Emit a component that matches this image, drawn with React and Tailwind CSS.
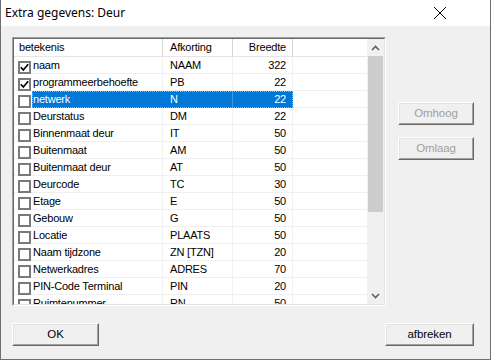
import React from 'react';

const rows = [
  { name: 'naam', abbr: 'NAAM', width: 322, checked: true },
  { name: 'programmeerbehoefte', abbr: 'PB', width: 22, checked: true },
  { name: 'netwerk', abbr: 'N', width: 22, selected: true },
  { name: 'Deurstatus', abbr: 'DM', width: 22 },
  { name: 'Binnenmaat deur', abbr: 'IT', width: 50 },
  { name: 'Buitenmaat', abbr: 'AM', width: 50 },
  { name: 'Buitenmaat deur', abbr: 'AT', width: 50 },
  { name: 'Deurcode', abbr: 'TC', width: 30 },
  { name: 'Etage', abbr: 'E', width: 50 },
  { name: 'Gebouw', abbr: 'G', width: 50 },
  { name: 'Locatie', abbr: 'PLAATS', width: 50 },
  { name: 'Naam tijdzone', abbr: 'ZN [TZN]', width: 20 },
  { name: 'Netwerkadres', abbr: 'ADRES', width: 70 },
  { name: 'PIN-Code Terminal', abbr: 'PIN', width: 20 },
  { name: 'Ruimtenummer', abbr: 'RN', width: 50 },
];

const font = { fontFamily: '"Liberation Sans", Arial, sans-serif' };

function Checkbox({ checked }) {
  return (
    <div className="w-[13px] h-[13px] border-2 border-[#7a7a7a] bg-white flex items-center justify-center">
      {checked && (
        <svg width="9" height="9" viewBox="0 0 9 9">
          <polyline points="0.8,4.2 3.3,7 8.2,1.2" fill="none" stroke="#000" strokeWidth="1.7" />
        </svg>
      )}
    </div>
  );
}

function Button({ children, disabled, className = '' }) {
  return (
    <div className={`border border-t-white border-l-white border-r-[#696969] border-b-[#696969] ${className}`}>
      <div className="h-full border border-t-[#e3e3e3] border-l-[#e3e3e3] border-r-[#a0a0a0] border-b-[#a0a0a0] bg-[#f0f0f0] flex items-center justify-center">
        <span className={`text-[11.5px] tracking-[-0.1px] ${disabled ? 'text-[#a0a0a0]' : 'text-black'}`}>{children}</span>
      </div>
    </div>
  );
}

function ListRow({ row }) {
  const sel = row.selected;
  return (
    <div className="flex h-[17px] text-[11px] tracking-[-0.2px]">
      <div className="w-[18px] shrink-0 flex items-start pt-[4px] pl-[4px] border-b border-[#f0f0f0]">
        <Checkbox checked={row.checked} />
      </div>
      <div className={`flex ${sel ? 'bg-[#0078d7] text-white outline outline-1 outline-dotted outline-[#ff9c3a] -outline-offset-1' : 'text-black'}`}>
        <div className={`w-[131px] pl-[1px] flex items-center border-b border-r ${sel ? 'border-[#0078d7]' : 'border-[#f0f0f0]'}`}>
          {row.name}
        </div>
        <div className={`w-[70px] pl-[7px] flex items-center border-b border-r ${sel ? 'border-[#0078d7] border-r-[#3d97e0]' : 'border-[#f0f0f0]'}`}>
          {row.abbr}
        </div>
        <div className={`w-[60px] pr-[6px] flex items-center justify-end border-b border-r ${sel ? 'border-[#0078d7]' : 'border-[#f0f0f0]'}`}>
          {row.width}
        </div>
      </div>
      <div className="flex-1 border-b border-[#f0f0f0]" />
    </div>
  );
}

export default function App() {
  return (
    <div className="w-[491px] h-[360px] flex flex-col border-l border-r border-b border-[#6f6f6f] bg-[#f0f0f0] overflow-hidden" style={font}>
      {/* Title bar */}
      <div className="h-[26px] bg-white flex items-center justify-between pl-[4px] pr-[43px] shrink-0">
        <span className="text-[12px] text-black" style={{ fontFamily: '"Noto Sans", "Liberation Sans", sans-serif' }}>Extra gegevens: Deur</span>
        <svg width="14" height="14" viewBox="0 0 14 14">
          <path d="M1 1 L13 13 M13 1 L1 13" stroke="#000" strokeWidth="1" />
        </svg>
      </div>

      {/* Body */}
      <div className="flex-1 flex flex-col pt-[11px] pl-[11px] pr-[16px]">
        <div className="flex">
          {/* List view */}
          <div className="w-[374px] h-[269px] border border-t-[#a0a0a0] border-l-[#a0a0a0] border-r-white border-b-white">
            <div className="h-full border border-t-[#696969] border-l-[#696969] border-r-[#e3e3e3] border-b-[#e3e3e3] bg-white flex overflow-hidden">
              <div className="flex-1 flex flex-col overflow-hidden">
                {/* Header */}
                <div className="flex h-[18px] shrink-0 text-[11px] tracking-[-0.2px] text-black border-b border-[#e5e5e5]">
                  <div className="w-[149px] pl-[5px] flex items-center border-r border-[#d5d5d5]">betekenis</div>
                  <div className="w-[70px] pl-[7px] flex items-center border-r border-[#d5d5d5]">Afkorting</div>
                  <div className="w-[60px] pr-[6px] flex items-center justify-end border-r border-[#d5d5d5]">Breedte</div>
                  <div className="flex-1" />
                </div>
                {rows.map((r) => (
                  <ListRow key={r.name} row={r} />
                ))}
              </div>
              {/* Scrollbar */}
              <div className="w-[17px] shrink-0 bg-[#f0f0f0] flex flex-col">
                <div className="h-[17px] flex items-center justify-center">
                  <svg width="9" height="6" viewBox="0 0 9 6">
                    <polyline points="1,5 4.5,1.5 8,5" fill="none" stroke="#606060" strokeWidth="1.6" />
                  </svg>
                </div>
                <div className="flex-1 flex flex-col px-[1px]">
                  <div className="h-[156px] bg-[#cdcdcd]" />
                </div>
                <div className="h-[17px] flex items-center justify-center">
                  <svg width="9" height="6" viewBox="0 0 9 6">
                    <polyline points="1,1 4.5,4.5 8,1" fill="none" stroke="#606060" strokeWidth="1.6" />
                  </svg>
                </div>
              </div>
            </div>
          </div>

          {/* Right buttons */}
          <div className="flex-1 flex flex-col items-end pt-[65px] gap-[12px]">
            <Button disabled className="w-[76px] h-[23px]">Omhoog</Button>
            <Button disabled className="w-[76px] h-[23px]">Omlaag</Button>
          </div>
        </div>

        {/* Bottom buttons */}
        <div className="flex justify-between mt-[17px]">
          <Button className="w-[87px] h-[23px]">OK</Button>
          <Button className="w-[89px] h-[23px]">afbreken</Button>
        </div>
      </div>
    </div>
  );
}
